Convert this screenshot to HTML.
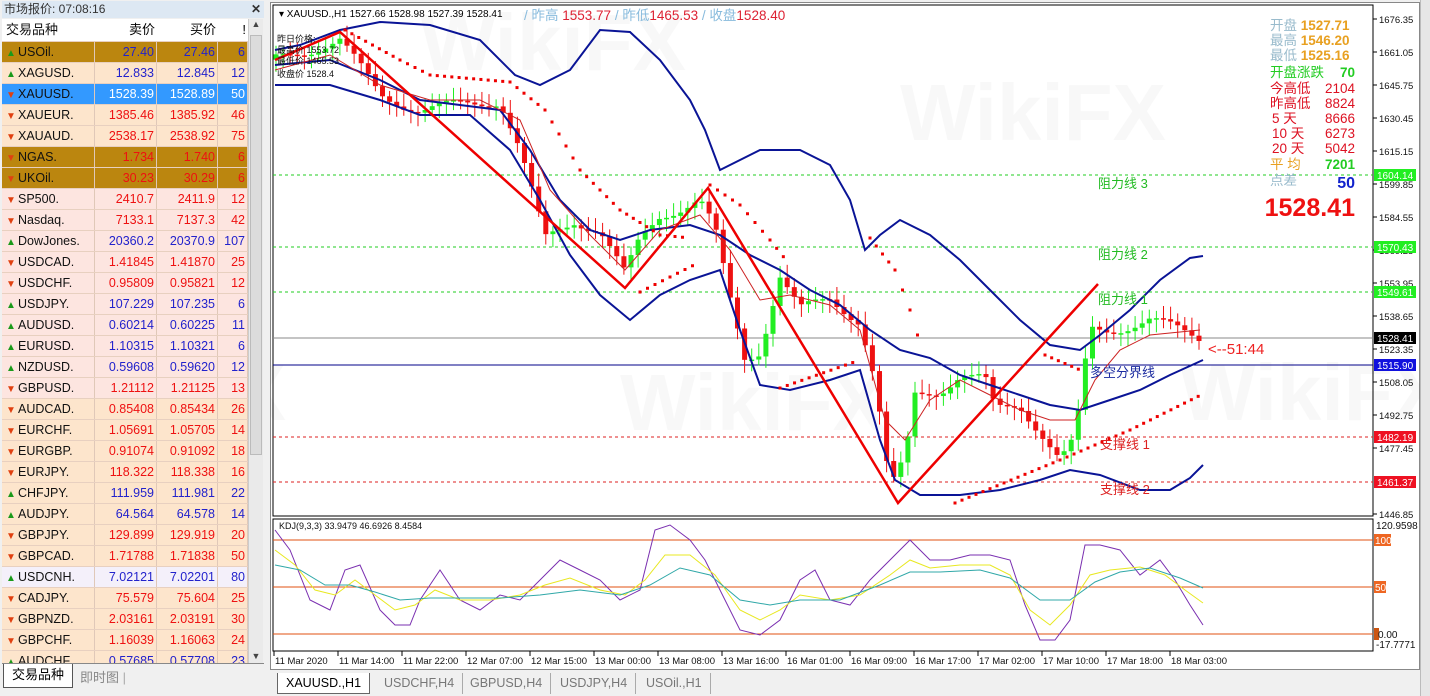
<!DOCTYPE html>
<html><head><meta charset="utf-8">
<style>
*{margin:0;padding:0;box-sizing:border-box}
body{width:1430px;height:696px;overflow:hidden;background:#f0f0f0;font-family:"Liberation Sans","Noto Sans CJK SC",sans-serif;position:relative}
#lp{position:absolute;left:0;top:0;width:266px;height:696px;background:#f0f0f0}
#lt{position:absolute;left:2px;top:1px;width:262px;height:17px;background:#dde8f3;font-size:12px;color:#333;padding-left:2px;line-height:17px}
#lt b{position:absolute;right:3px;top:0;font-size:12px}
#tbl{position:absolute;left:2px;top:19px;width:246px}
.r{height:21px;display:flex;font-size:12.5px;line-height:20px;border-bottom:1px solid #e8d0c0}
.r div{border-right:1px solid #e0c8b8;text-align:right;padding-right:2px}
.r .n{width:93px;text-align:left;padding-left:4px;color:#111}
.r .b{width:62px}.r .a{width:61px}.r .s{width:30px}
.h{background:#fff;height:23px;line-height:22px;font-size:13px}
.h div{border-right:none}
.u{color:#2222cc}.d{color:#ee1111}
.g{background:#bb860f}.p{background:#fde5cc}.k{background:#fde5e0}.sel{background:#3399ff}.sel div{color:#fff}
.ar{display:inline-block;width:9px;font-size:10px;margin-right:3px}
#sb{position:absolute;left:248px;top:19px;width:15px;height:644px;background:#eaeaea;border-left:1px solid #ccc}
#ch{position:absolute;left:270px;top:2px;width:1150px;height:668px;background:#fff;border:1px solid #888}
#tabs{position:absolute;left:272px;top:673px;height:23px;font-size:12.5px;color:#777}
.tab{position:absolute;top:0;height:21px;line-height:21px;padding:0 8px;border-right:1px solid #aaa}
#vs{position:absolute;left:1420px;top:0;width:10px;height:696px;background:#e6e6e6;border-left:1px solid #bbb}
</style></head><body>
<div id="lp">
<div id="lt">市场报价: 07:08:16<b>✕</b></div>
<div id="tbl">
<div class="r h"><div class="n">交易品种</div><div class="b">卖价</div><div class="a">买价</div><div class="s">!</div></div>
</div>
<div id="sb"><div style="height:14px;text-align:center;font-size:9px;color:#444">▲</div><div style="margin:2px 1px;height:420px;background:#dcdcdc;border:1px solid #bbb"></div><div style="position:absolute;bottom:2px;width:14px;text-align:center;font-size:9px;color:#444">▼</div></div>
<div style="position:absolute;left:2px;top:663px;width:262px;height:1px;background:#888"></div>
<div style="position:absolute;left:3px;top:664px;width:70px;height:24px;background:#fff;border:1px solid #555;border-top:none;font-size:13px;line-height:22px;text-align:center">交易品种</div>
<div style="position:absolute;left:80px;top:667px;font-size:13px;color:#888">即时图 <span style="color:#aaa">|</span></div>
</div>
<div id="ch">
<svg id="sv" width="1150" height="668" viewBox="270 2 1150 668" style="position:absolute;left:-1px;top:-1px" font-family="Liberation Sans, Noto Sans CJK SC, sans-serif">
<g opacity="0.035" font-size="80" font-weight="bold" fill="#555">
<text x="420" y="70">WikiFX</text><text x="900" y="140">WikiFX</text><text x="620" y="430">WikiFX</text><text x="1180" y="420">WikiFX</text><text x="20" y="420">WikiFX</text>
</g>
<rect x="273" y="5" width="1100" height="511" fill="none" stroke="#000"/>
<rect x="273" y="519" width="1100" height="132" fill="none" stroke="#000"/>
<g stroke-width="1">
<line x1="273" x2="1373" y1="175" y2="175" stroke="#22cc22" stroke-dasharray="3,3"/>
<line x1="273" x2="1373" y1="247" y2="247" stroke="#22cc22" stroke-dasharray="3,3"/>
<line x1="273" x2="1373" y1="292" y2="292" stroke="#22cc22" stroke-dasharray="3,3"/>
<line x1="273" x2="1373" y1="338" y2="338" stroke="#888"/>
<line x1="273" x2="1373" y1="365" y2="365" stroke="#000088"/>
<line x1="273" x2="1373" y1="437" y2="437" stroke="#dd2222" stroke-dasharray="3,3"/>
<line x1="273" x2="1373" y1="482" y2="482" stroke="#dd2222" stroke-dasharray="3,3"/>
<line x1="273" x2="1373" y1="540" y2="540" stroke="#e05010"/>
<line x1="273" x2="1373" y1="587" y2="587" stroke="#e05010"/>
<line x1="273" x2="1373" y1="634" y2="634" stroke="#e05010"/>
</g>
<g id="cd"></g>
<g fill="none" stroke="#0a1496" stroke-width="2">
<polyline points="275,50 300,45 340,30 380,22 430,25 480,40 515,75 540,85 570,70 600,30 630,32 660,60 690,100 705,130 720,170 740,160 760,150 800,150 830,165 850,200 865,250 880,235 900,220 930,235 960,260 990,290 1020,320 1050,345 1080,350 1100,335 1130,310 1160,280 1190,258 1203,256"/>
<polyline points="275,65 330,60 380,80 420,100 460,105 500,110 530,150 560,200 590,230 620,240 650,230 690,225 720,235 750,255 780,270 810,290 840,305 870,330 900,350 930,358 960,375 990,385 1020,395 1050,405 1080,410 1110,400 1140,390 1170,375 1203,360"/>
<polyline points="275,85 330,85 380,100 420,115 470,115 510,150 540,200 570,255 600,295 630,320 660,295 690,280 720,270 740,330 760,385 790,390 830,380 860,370 880,440 895,480 920,495 960,495 1000,490 1040,480 1070,470 1100,475 1140,490 1170,490 1190,478 1203,465"/>
</g>
<polyline fill="none" stroke="#cc2222" stroke-width="1" points="275,70 330,55 380,85 430,100 480,100 520,120 550,190 590,235 625,270 660,230 700,215 730,250 760,300 790,295 830,305 860,330 885,420 905,440 930,400 960,380 990,395 1020,410 1050,420 1075,420 1095,380 1120,350 1150,335 1200,330"/>
<polyline fill="none" stroke="#ee0000" stroke-width="2.5" points="275,60 340,32 625,288 708,188 898,503 1098,284"/>
<g id="sar" fill="#ee0000"></g>
<g id="kdj" fill="none" stroke-width="1">
<polyline stroke="#7a2fb0" points="275,530 290,550 310,600 330,610 345,570 360,565 380,610 395,625 410,625 420,600 440,570 460,600 480,610 500,595 520,600 540,580 560,560 580,570 600,580 620,600 640,590 655,530 670,525 690,540 705,560 720,590 740,630 760,635 780,620 800,580 815,570 830,600 850,605 870,580 890,560 910,540 930,560 950,560 970,555 990,555 1010,560 1025,605 1040,640 1055,640 1070,620 1085,545 1100,545 1120,550 1140,575 1160,560 1175,580 1190,605 1203,625"/>
<polyline stroke="#e8e820" points="275,550 295,565 315,590 335,595 355,580 375,595 395,610 415,605 435,590 460,600 490,600 520,595 545,585 570,578 600,590 625,595 645,580 665,555 690,555 715,575 740,610 760,620 780,610 800,595 830,600 860,595 890,575 910,560 930,568 960,565 990,565 1010,575 1030,610 1050,625 1070,605 1090,575 1110,570 1140,567 1165,575 1185,590 1203,603"/>
<polyline stroke="#30a8a8" points="275,565 300,570 325,585 350,585 375,592 400,600 430,598 460,598 500,598 540,595 580,590 620,595 650,585 680,568 710,575 740,600 770,605 800,600 840,600 880,585 910,572 940,572 980,570 1010,578 1040,600 1070,600 1095,582 1120,572 1150,568 1180,578 1203,588"/>
</g>
<g font-size="13" font-family="Liberation Sans, Noto Sans CJK SC, sans-serif">
<text x="1098" y="188" fill="#22bb22">阻力线 3</text>
<text x="1098" y="259" fill="#22bb22">阻力线 2</text>
<text x="1098" y="304" fill="#22bb22">阻力线 1</text>
<text x="1090" y="377" fill="#1a2aa0">多空分界线</text>
<text x="1100" y="449" fill="#dd2222">支撑线 1</text>
<text x="1100" y="494" fill="#dd2222">支撑线 2</text>
<text x="1208" y="354" fill="#ee2222" font-size="15">&lt;--51:44</text>
</g>
<text x="279" y="17" font-size="10" fill="#000">▾ XAUUSD.,H1  1527.66 1528.98 1527.39 1528.41</text>
<text x="524" y="20" font-size="13.5" font-family="Liberation Sans, Noto Sans CJK SC, sans-serif"><tspan fill="#88bbdd">/ 昨高 </tspan><tspan fill="#dd2233">1553.77 </tspan><tspan fill="#88bbdd"> / 昨低</tspan><tspan fill="#dd2233">1465.53 </tspan><tspan fill="#88bbdd"> / 收盘</tspan><tspan fill="#dd2233">1528.40</tspan></text>
<g font-size="9" fill="#111"><text x="277" y="42">昨日价格:</text><text x="277" y="53">最高价 1553.72</text><text x="277" y="64">最低价 1465.53</text><text x="277" y="77">收盘价 1528.4</text></g>
<g font-size="13.5" font-family="Liberation Sans, Noto Sans CJK SC, sans-serif">
<text x="1270" y="30" fill="#99bbcc">开盘 <tspan fill="#e8a020" font-weight="bold">1527.71</tspan></text>
<text x="1270" y="45" fill="#99bbcc">最高 <tspan fill="#e8a020" font-weight="bold">1546.20</tspan></text>
<text x="1270" y="60" fill="#99bbcc">最低 <tspan fill="#e8a020" font-weight="bold">1525.16</tspan></text>
<text x="1270" y="77" fill="#22cc22">开盘涨跌</text><text x="1355" y="77" fill="#22cc22" font-weight="bold" text-anchor="end">70</text>
<g fill="#dd1122"><text x="1270" y="93">今高低</text><text x="1270" y="108">昨高低</text><text x="1272" y="123">5    天</text><text x="1272" y="138">10  天</text><text x="1272" y="153">20  天</text>
<g text-anchor="end"><text x="1355" y="93">2104</text><text x="1355" y="108">8824</text><text x="1355" y="123">8666</text><text x="1355" y="138">6273</text><text x="1355" y="153">5042</text></g></g>
<text x="1270" y="169" fill="#e8a020">平  均</text><text x="1355" y="169" fill="#22cc22" font-weight="bold" text-anchor="end">7201</text>
<text x="1270" y="185" fill="#99bbcc">点差</text><text x="1355" y="188" fill="#1122cc" font-weight="bold" text-anchor="end" font-size="16">50</text>
<text x="1355" y="216" fill="#ee1111" font-weight="bold" text-anchor="end" font-size="25">1528.41</text>
</g>
<g id="ax" font-size="9.5" fill="#111"></g>
<g font-size="10">
<rect x="1374" y="169" width="42" height="12" fill="#22ee22"/><text x="1377" y="179" fill="#fff">1604.14</text>
<rect x="1374" y="241" width="42" height="12" fill="#22ee22"/><text x="1377" y="251" fill="#fff">1570.43</text>
<rect x="1374" y="286" width="42" height="12" fill="#22ee22"/><text x="1377" y="296" fill="#fff">1549.61</text>
<rect x="1374" y="332" width="42" height="12" fill="#000"/><text x="1377" y="342" fill="#fff">1528.41</text>
<rect x="1374" y="359" width="42" height="12" fill="#1111dd"/><text x="1377" y="369" fill="#fff">1515.90</text>
<rect x="1374" y="431" width="42" height="12" fill="#ee1122"/><text x="1377" y="441" fill="#fff">1482.19</text>
<rect x="1374" y="476" width="42" height="12" fill="#ee1122"/><text x="1377" y="486" fill="#fff">1461.37</text>
<rect x="1374" y="534" width="17" height="12" fill="#ee6622"/><text x="1375" y="544" fill="#fff">100</text>
<rect x="1374" y="581" width="12" height="12" fill="#ee6622"/><text x="1375" y="591" fill="#fff">50</text>
<rect x="1374" y="628" width="5" height="12" fill="#cc5511"/><text x="1378" y="638" fill="#111">0.00</text>
<text x="1376" y="529" fill="#111">120.9598</text><text x="1376" y="648" fill="#111">-17.7771</text>
</g>
<text x="279" y="529" font-size="9" fill="#111">KDJ(9,3,3) 33.9479 46.6926 8.4584</text>
<g id="tx" font-size="9.5" fill="#111"></g>
</svg>
</div>
<div id="tabs">
<div class="tab" style="left:5px;background:#fff;color:#000;border:1px solid #666;border-top:none;width:93px;text-align:center">XAUUSD.,H1</div>
<div class="tab" style="left:104px">USDCHF,H4</div>
<div class="tab" style="left:190px">GBPUSD,H4</div>
<div class="tab" style="left:280px">USDJPY,H4</div>
<div class="tab" style="left:366px">USOil.,H1</div>
</div>
<div id="vs"></div>
<script>
var rows=[["USOil.","27.40","27.46","6","u","g"],["XAGUSD.","12.833","12.845","12","u","p"],["XAUUSD.","1528.39","1528.89","50","d","sel"],["XAUEUR.","1385.46","1385.92","46","d","p"],["XAUAUD.","2538.17","2538.92","75","d","p"],["NGAS.","1.734","1.740","6","d","g"],["UKOil.","30.23","30.29","6","d","g"],["SP500.","2410.7","2411.9","12","d","k"],["Nasdaq.","7133.1","7137.3","42","d","k"],["DowJones.","20360.2","20370.9","107","u","k"],["USDCAD.","1.41845","1.41870","25","d","k"],["USDCHF.","0.95809","0.95821","12","d","k"],["USDJPY.","107.229","107.235","6","u","k"],["AUDUSD.","0.60214","0.60225","11","u","k"],["EURUSD.","1.10315","1.10321","6","u","k"],["NZDUSD.","0.59608","0.59620","12","u","k"],["GBPUSD.","1.21112","1.21125","13","d","k"],["AUDCAD.","0.85408","0.85434","26","d","p"],["EURCHF.","1.05691","1.05705","14","d","p"],["EURGBP.","0.91074","0.91092","18","d","p"],["EURJPY.","118.322","118.338","16","d","p"],["CHFJPY.","111.959","111.981","22","u","p"],["AUDJPY.","64.564","64.578","14","u","p"],["GBPJPY.","129.899","129.919","20","d","p"],["GBPCAD.","1.71788","1.71838","50","d","p"],["USDCNH.","7.02121","7.02201","80","u","w"],["CADJPY.","75.579","75.604","25","d","p"],["GBPNZD.","2.03161","2.03191","30","d","p"],["GBPCHF.","1.16039","1.16063","24","d","p"],["AUDCHF.","0.57685","0.57708","23","u","p"]];
var h='';rows.forEach(function(r){var st=r[5]=='w'?' style="background:#f4f0fa"':'';var ar=r[4]=='u'?'<span class="ar" style="color:#1a9a1a">▲</span>':'<span class="ar" style="color:#e04010">▼</span>';h+='<div class="r '+r[5]+'"'+st+'><div class="n">'+ar+r[0]+'</div><div class="b '+r[4]+'">'+r[1]+'</div><div class="a '+r[4]+'">'+r[2]+'</div><div class="s '+r[4]+'">'+r[3]+'</div></div>';});
document.getElementById('tbl').innerHTML+=h;
document.querySelector('#tbl').style.height='644px';document.querySelector('#tbl').style.overflow='hidden';
var NS='http://www.w3.org/2000/svg';
function el(p,t,a){var e=document.createElementNS(NS,t);for(var k in a)e.setAttribute(k,a[k]);if(a.txt){e.textContent=a.txt;e.removeAttribute('txt')}p.appendChild(e);return e}
var cp=[[275,60],[340,40],[380,95],[420,110],[460,105],[500,100],[520,150],[545,240],[575,220],[600,230],[625,275],[640,240],[660,215],[700,200],[715,230],[730,300],[745,360],[760,350],[780,275],[800,310],[830,300],[860,320],[875,380],[890,490],[905,460],[915,395],[940,390],[960,375],[985,380],[995,410],[1020,405],[1040,430],[1060,460],[1075,440],[1090,330],[1110,330],[1150,320],[1200,338]];
function f(x){for(var i=1;i<cp.length;i++){if(x<=cp[i][0]){var a=cp[i-1],b=cp[i];return a[1]+(b[1]-a[1])*(x-a[0])/(b[0]-a[0])}}return cp[cp.length-1][1]}
var cd=document.getElementById('cd');var prev=f(276);
for(var x=276;x<=1200;x+=7.1){var c=f(x)+Math.sin(x*1.7)*6;var o=prev;var up=c<o;var col=up?'#22ee22':'#ee1111';var t=Math.min(o,c),b=Math.max(o,c);if(b-t<1.5)b=t+1.5;
el(cd,'line',{x1:x,x2:x,y1:t-5-Math.abs(Math.sin(x))*8,y2:b+5+Math.abs(Math.cos(x))*8,stroke:col});el(cd,'rect',{x:x-2.5,y:t,width:5,height:b-t,fill:col});prev=c;}
var sar=document.getElementById('sar');
function seg(pts,step){for(var i=1;i<pts.length;i++){var a=pts[i-1],b=pts[i];var n=Math.max(1,Math.round((b[0]-a[0])/step));for(var j=0;j<n;j++){el(sar,'rect',{x:a[0]+(b[0]-a[0])*j/n-1.5,y:a[1]+(b[1]-a[1])*j/n-1.5,width:3,height:3})}}}
seg([[345,30],[400,60],[430,75],[510,82],[545,110],[580,170],[620,210],[660,235],[690,238]],7.1);
seg([[640,292],[700,262]],7.1);
seg([[710,185],[740,205],[770,240],[790,265]],7.1);
seg([[780,388],[860,360]],7.1);
seg([[870,238],[895,270],[910,310],[925,360]],7.1);
seg([[1045,355],[1085,372]],7.1);
seg([[955,503],[1060,460],[1130,430],[1205,393]],7.1);
var ax=document.getElementById('ax');
["1676.35","1661.05","1645.75","1630.45","1615.15","1599.85","1584.55","1569.25","1553.95","1538.65","1523.35","1508.05","1492.75","1477.45","1446.85"].forEach(function(v,i){var y=i<14?19+i*33:514;el(ax,'line',{x1:1373,x2:1377,y1:y,y2:y,stroke:'#000'});el(ax,'text',{x:1379,y:y+4,txt:v});});
var tx=document.getElementById('tx');
["11 Mar 2020","11 Mar 14:00","11 Mar 22:00","12 Mar 07:00","12 Mar 15:00","13 Mar 00:00","13 Mar 08:00","13 Mar 16:00","16 Mar 01:00","16 Mar 09:00","16 Mar 17:00","17 Mar 02:00","17 Mar 10:00","17 Mar 18:00","18 Mar 03:00"].forEach(function(v,i){var x=274+i*64;el(tx,'line',{x1:x,x2:x,y1:651,y2:656,stroke:'#000'});el(tx,'text',{x:x+1,y:664,txt:v});});
</script>
</body></html>
